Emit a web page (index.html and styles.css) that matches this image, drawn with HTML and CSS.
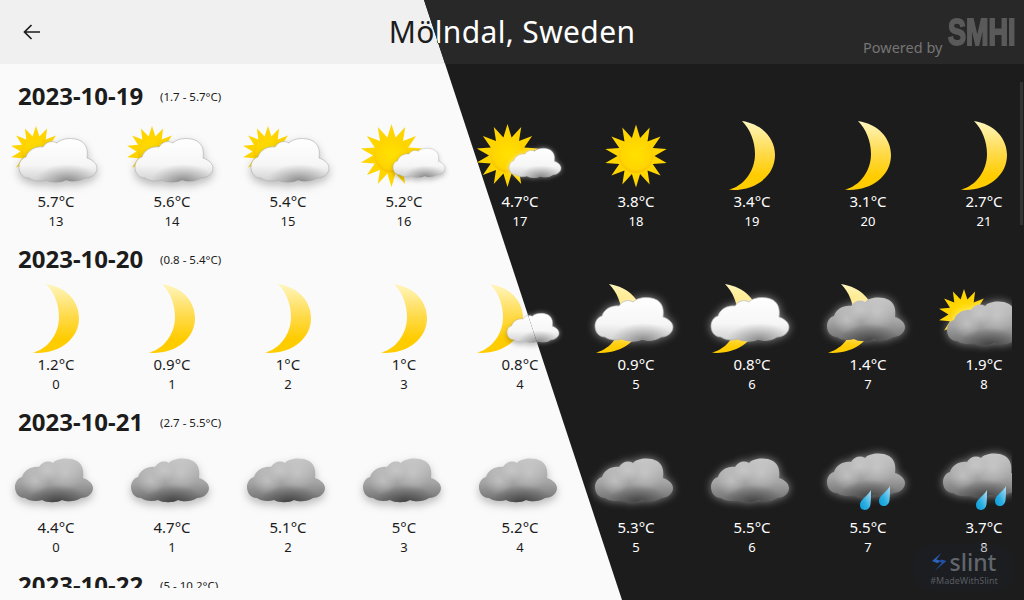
FILE: index.html
```html
<!DOCTYPE html>
<html lang="en">
<head>
  <meta charset="UTF-8">
  <meta name="viewport" content="width=device-width, initial-scale=1.0">
  <title>Mölndal, Sweden</title>
  <link rel="stylesheet" href="styles.css">
</head>
<body>

  <!-- shared gradients and shapes for the weather icons -->
  <svg class="defs" aria-hidden="true">
    <defs>
      <linearGradient id="cloudWhite" x1="0" y1="0" x2="0" y2="1">
        <stop offset="0" stop-color="#fff"/>
        <stop offset="0.6" stop-color="#f6f6f6"/>
        <stop offset="1" stop-color="#cfcfcf"/>
      </linearGradient>
      <radialGradient id="cloudWhiteShade" cx="0.62" cy="1" r="0.42">
        <stop offset="0" stop-color="#777" stop-opacity="0.85"/>
        <stop offset="1" stop-color="#999" stop-opacity="0"/>
      </radialGradient>
      <linearGradient id="cloudGray" x1="0" y1="0" x2="0" y2="1">
        <stop offset="0" stop-color="#c4c4c4"/>
        <stop offset="0.55" stop-color="#a4a4a4"/>
        <stop offset="1" stop-color="#6c6c6c"/>
      </linearGradient>
      <radialGradient id="cloudGrayShade" cx="0.55" cy="1" r="0.4">
        <stop offset="0" stop-color="#333" stop-opacity="0.75"/>
        <stop offset="1" stop-color="#444" stop-opacity="0"/>
      </radialGradient>
      <radialGradient id="lobeLight">
        <stop offset="0" stop-color="#dcdcdc" stop-opacity="0.45"/>
        <stop offset="1" stop-color="#dcdcdc" stop-opacity="0"/>
      </radialGradient>
      <linearGradient id="moonFill" x1="0" y1="0" x2="0" y2="1">
        <stop offset="0" stop-color="#fff6c0"/>
        <stop offset="0.45" stop-color="#ffdb4d"/>
        <stop offset="0.8" stop-color="#ffcc00"/>
      </linearGradient>
      <radialGradient id="sunCore" cx="0.5" cy="0.45" r="0.55">
        <stop offset="0" stop-color="#ffe100"/>
        <stop offset="0.8" stop-color="#ffd500"/>
        <stop offset="1" stop-color="#f8bf00"/>
      </radialGradient>
      <linearGradient id="dropFill" x1="1" y1="0" x2="0" y2="1">
        <stop offset="0" stop-color="#b5dff2"/>
        <stop offset="0.6" stop-color="#2aaee2"/>
        <stop offset="1" stop-color="#0b9ad6"/>
      </linearGradient>

      <path id="cloudShape" d="M10 40C3 40 0 34 0 29C0 24 3 20 7 19C9 12 17 8 24 9C27 4 33 2 38 5C42 0 55-1 62 3C68 7 69 13 68 20C74 22 78 26 78 30C78 36 72 40 66 40C60 44 52 44 47 42C42 45 32 45 27 42C21 44 14 43 10 40Z"/>
      <clipPath id="cloudClip">
        <use href="#cloudShape"/>
      </clipPath>
      <g id="cloudLight">
        <use href="#cloudShape" fill="url(#cloudWhite)" stroke="#b5b5b5" stroke-width="0.7"/>
        <use href="#cloudShape" fill="url(#cloudWhiteShade)"/>
      </g>
      <g id="cloudDark">
        <use href="#cloudShape" fill="url(#cloudGray)"/>
        <g clip-path="url(#cloudClip)">
          <circle cx="50" cy="15" r="18" fill="url(#lobeLight)"/>
          <circle cx="32" cy="13" r="11" fill="url(#lobeLight)"/>
          <circle cx="20" cy="23" r="14" fill="url(#lobeLight)"/>
        </g>
        <use href="#cloudShape" fill="url(#cloudGrayShade)"/>
      </g>
      <path id="moon" fill="url(#moonFill)" d="M13 0C33 3 46 17 46 34C46 54 28 69 4 69L0 68.5C15 65 26 50 26 33C26 20 21 8 13 0Z"/>
      <path id="drop" fill="url(#dropFill)" d="M11 0C11 5 11 10 10.5 14C10 18 7.5 20 5 20C2 20 0 18 0 15C0 11 4 8 6 6C8 4 10 2 11 0Z"/>
    </defs>
  </svg>

  <div class="screen light" id="lightScreen"></div>
  <div class="screen dark" id="darkScreen"></div>

  <div class="slint-badge">
    <div class="slint-row">
      <svg class="slint-logo" viewBox="0 0 15 18" width="15" height="18">
        <path d="M9.5 0L0 8L5.5 10.2L8.5 7.8L4.4 6.4Z" fill="#2a62bd"/>
        <path d="M14.5 8L9.5 6.4L6.8 8.8L10 9.8L2.5 18Z" fill="#1f52a6"/>
      </svg>
      <span class="slint-name">slint</span>
    </div>
    <div class="slint-tag">#MadeWithSlint</div>
  </div>

  <script src="app.js"></script>
</body>
</html>
```

FILE: styles.css
```css
body {
  margin: 0;
  width: 1024px;
  height: 600px;
  overflow: hidden;
  position: relative;
  font-family: "Noto Sans", sans-serif;
}

.defs {
  position: absolute;
  width: 0;
  height: 0;
}

.screen {
  width: 1024px;
  height: 600px;
  display: flex;
  flex-direction: column;
}

/* the dark copy lies over the light one, cut along the diagonal */
.dark {
  position: absolute;
  top: 0;
  left: 0;
  clip-path: polygon(424px 0, 1024px 0, 1024px 600px, 622px 600px);
}

.light {
  background-color: #fafafa;
  color: #1c1c1c;
}

.dark {
  background-color: #1c1c1c;
  color: #fff;
}

/* Header */
.top-bar {
  height: 64px;
  flex-shrink: 0;
  display: flex;
  align-items: center;
  justify-content: center;
  position: relative;
}

.light .top-bar {
  background-color: #f0f0f0;
}

.dark .top-bar {
  background-color: #282828;
}

.back-arrow {
  position: absolute;
  left: 23px;
  top: 23px;
}

.place {
  font-size: 30px;
  line-height: 64px;
  letter-spacing: 0.35px;
  font-weight: 400;
  margin: 0;
}

.powered {
  position: absolute;
  left: 863px;
  top: 37px;
  font-size: 14.5px;
  line-height: 20px;
  color: #757575;
}

.smhi {
  position: absolute;
  left: 948px;
  top: 13px;
  font-family: "Liberation Sans", sans-serif;
  font-weight: 700;
  font-size: 37px;
  line-height: 40px;
  color: #5a5a5a;
  -webkit-text-stroke: 2px #5a5a5a;
  transform: scaleX(0.73);
  transform-origin: left center;
}

/* Forecast list */
.days {
  flex: 1;
  width: 1012px;
  margin-bottom: 12px;
  padding-top: 16px;
  box-sizing: border-box;
  overflow: hidden;
}

.day {
  height: 163px;
}

.day-head {
  display: flex;
  align-items: center;
  height: 32px;
  padding-left: 18px;
}

.day-date {
  font-size: 24px;
  font-weight: 700;
  line-height: 32px;
  width: 142px;
}

.day-range {
  font-size: 11.5px;
}

.hours {
  display: flex;
  padding-left: 12px;
  gap: 28px;
  margin-top: 8px;
}

.hour {
  width: 88px;
  flex-shrink: 0;
  text-align: center;
}

.icon {
  display: block;
  overflow: visible;
}

.temp {
  font-size: 15px;
  line-height: 19px;
}

.hour-no {
  font-size: 13px;
  line-height: 21px;
}

.light .cloud {
  filter: drop-shadow(0 4px 4px rgba(0, 0, 0, 0.25));
}

.dark .cloud {
  filter: drop-shadow(0 0 4px rgba(255, 255, 255, 0.5));
}

.scrollbar {
  position: absolute;
  left: 1020px;
  top: 82px;
  width: 3px;
  height: 143px;
  background-color: #333;
}

/* Slint badge, over everything */
.slint-badge {
  position: absolute;
  left: 913px;
  top: 544px;
  width: 102px;
  height: 47px;
  border-radius: 22px;
  background-color: rgba(25, 32, 45, 0.28);
  display: flex;
  flex-direction: column;
  align-items: center;
  box-sizing: border-box;
  padding-top: 7px;
}

.slint-row {
  display: flex;
  align-items: center;
  gap: 3px;
  height: 22px;
}

.slint-name {
  font-size: 23px;
  font-weight: 500;
  line-height: 22px;
  color: #62666b;
}

.slint-tag {
  font-size: 9px;
  line-height: 12px;
  margin-top: 2px;
  color: #595c60;
}
```

FILE: app.js
```js
// Forecast data: icon, temperature, hour
const days = [
  {
    date: "2023-10-19", range: "(1.7 - 5.7°C)",
    hours: [
      ["sunCloud", "5.7", 13], ["sunCloud", "5.6", 14], ["sunCloud", "5.4", 15],
      ["sunSmall", "5.2", 16], ["sunSmall", "4.7", 17], ["sun", "3.8", 18],
      ["moon", "3.4", 19], ["moon", "3.1", 20], ["moon", "2.7", 21]
    ]
  },
  {
    date: "2023-10-20", range: "(0.8 - 5.4°C)",
    hours: [
      ["moon", "1.2", 0], ["moon", "0.9", 1], ["moon", "1", 2],
      ["moon", "1", 3], ["moonSmall", "0.8", 4], ["moonCloud", "0.9", 5],
      ["moonCloud", "0.8", 6], ["moonGray", "1.4", 7], ["sunGray", "1.9", 8]
    ]
  },
  {
    date: "2023-10-21", range: "(2.7 - 5.5°C)",
    hours: [
      ["gray", "4.4", 0], ["gray", "4.7", 1], ["gray", "5.1", 2],
      ["gray", "5", 3], ["gray", "5.2", 4], ["gray", "5.3", 5],
      ["gray", "5.5", 6], ["rain", "5.5", 7], ["rain", "3.7", 8]
    ]
  },
  {
    date: "2023-10-22", range: "(5 - 10.2°C)",
    hours: []
  }
];

// 14 pointed star with a round core
function sun(cx, cy, outer, inner, core) {
  let points = [];
  for (let i = 0; i < 28; i++) {
    const angle = (i * Math.PI) / 14;
    const r = i % 2 === 0 ? outer : inner;
    points.push((cx + r * Math.sin(angle)).toFixed(1) + "," + (cy - r * Math.cos(angle)).toFixed(1));
  }
  return '<polygon fill="#ffd500" points="' + points.join(" ") + '"/>' +
    '<circle cx="' + cx + '" cy="' + cy + '" r="' + core + '" fill="url(#sunCore)"/>';
}

function cloud(id, x, y, scale) {
  const size = scale ? " scale(" + scale + ")" : "";
  return '<use class="cloud" href="#' + id + '" transform="translate(' + x + " " + y + ")" + size + '"/>';
}

function moon(x) {
  return '<use href="#moon" transform="translate(' + x + ' 1)"/>';
}

function drop(x, y) {
  return '<use href="#drop" transform="translate(' + x + " " + y + ')"/>';
}

const icons = {
  sun: sun(44, 36, 31.5, 18.5, 17),
  sunSmall: sun(31.5, 35.5, 31.5, 18.5, 17) + cloud("cloudLight", 33, 28, 0.667),
  sunCloud: sun(24, 31.5, 25.5, 15.5, 14) + cloud("cloudLight", 7, 18),
  sunGray: sun(24, 31.5, 25.5, 15.5, 14) + cloud("cloudDark", 7, 18),
  moon: moon(21),
  moonSmall: moon(1) + cloud("cloudLight", 31, 30, 0.667),
  moonCloud: moon(4) + cloud("cloudLight", 3, 14),
  moonGray: moon(4) + cloud("cloudDark", 3, 14),
  gray: cloud("cloudDark", 3, 12),
  rain: cloud("cloudDark", 3, 7) + drop(36, 44) + drop(55, 40)
};

function hourHtml(h) {
  return '<div class="hour">' +
    '<svg class="icon" width="88" height="72" viewBox="0 0 88 72">' + icons[h[0]] + "</svg>" +
    '<div class="temp">' + h[1] + "°C</div>" +
    '<div class="hour-no">' + h[2] + "</div></div>";
}

function dayHtml(d) {
  return '<section class="day"><div class="day-head">' +
    '<span class="day-date">' + d.date + "</span>" +
    '<span class="day-range">' + d.range + "</span></div>" +
    '<div class="hours">' + d.hours.map(hourHtml).join("") + "</div></section>";
}

function render(id, extra) {
  document.getElementById(id).innerHTML =
    '<header class="top-bar">' +
    '<svg class="back-arrow" width="18" height="18" viewBox="0 0 18 18"><path d="M17 9H2M8.5 2L1.5 9L8.5 16" fill="none" stroke="currentColor" stroke-width="1.7"/></svg>' +
    '<h1 class="place">Mölndal, Sweden</h1>' +
    '<span class="powered">Powered by</span><span class="smhi">SMHI</span></header>' +
    '<main class="days">' + days.map(dayHtml).join("") + "</main>" + extra;
}

render("lightScreen", "");
render("darkScreen", '<div class="scrollbar"></div>');
```
